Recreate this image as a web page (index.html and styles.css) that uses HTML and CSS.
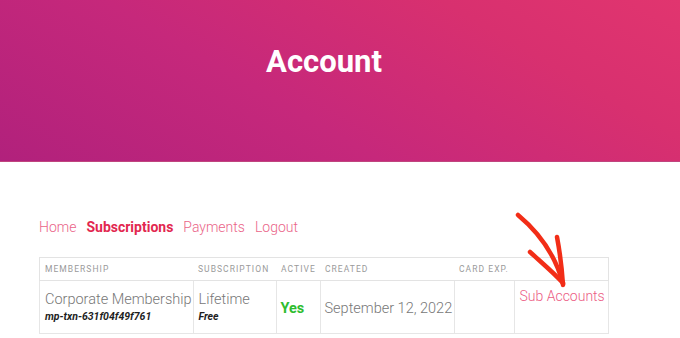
FILE: index.html
```html
<!DOCTYPE html>
<html>
<head>
    <title>Account</title>
    <link rel="stylesheet" href="styles.css">
</head>
<body>
    <div class="hero">
        <div class="hero-inner">
            <h1>Account</h1>
        </div>
    </div>

    <div class="content">
        <nav class="account-nav">
            <a href="#">Home</a>
            <a href="#" class="current">Subscriptions</a>
            <a href="#">Payments</a>
            <a href="#">Logout</a>
        </nav>

        <div class="table-wrap">
            <table class="subs">
                <thead>
                    <tr>
                        <th class="col-membership">Membership</th>
                        <th class="col-subscription">Subscription</th>
                        <th class="col-active">Active</th>
                        <th class="col-created">Created</th>
                        <th class="col-card">Card Exp.</th>
                        <th class="col-actions"></th>
                    </tr>
                </thead>
                <tbody>
                    <tr>
                        <td>
                            <div class="main-text">Corporate Membership</div>
                            <div class="sub-text">mp-txn-631f04f49f761</div>
                        </td>
                        <td>
                            <div class="main-text">Lifetime</div>
                            <div class="sub-text">Free</div>
                        </td>
                        <td class="middle"><span class="yes">Yes</span></td>
                        <td class="middle"><span class="main-text">September 12, 2022</span></td>
                        <td></td>
                        <td class="actions"><a href="#">Sub Accounts</a></td>
                    </tr>
                </tbody>
            </table>

            <!-- hand drawn pointer over the Sub Accounts link -->
            <svg class="arrow" width="70" height="90" viewBox="0 0 70 90">
                <path d="M6 8 C 24 23, 43 46, 51 77" />
                <path d="M45 30 C 48 46, 50 62, 51 78" />
                <path d="M18 45 C 30 56, 42 66, 51 76" />
            </svg>
        </div>
    </div>
</body>
</html>
```

FILE: styles.css
```css
body {
    margin: 0;
    font-family: Roboto, "Liberation Sans", Arial, sans-serif;
    background: #fff;
}
.hero {
    height: 161px;
    background: linear-gradient(30deg, #b1217c 0%, #c6287b 40%, #d8306f 75%, #e1356f 100%);
    border-bottom: 1px solid #c0457e;
}
.hero-inner {
    margin-left: 39px;
    width: 570px;
    text-align: center;
}
.hero h1 {
    margin: 0;
    padding-top: 44px;
    color: #fff;
    font-size: 31px;
    font-weight: 700;
    line-height: 36px;
}
.content {
    margin-left: 39px;
    width: 570px;
    padding-top: 53px;
}
.account-nav {
    display: flex;
    gap: 10px;
    font-size: 14px;
    line-height: 24px;
}
.account-nav a {
    color: #ea6488;
    text-decoration: none;
    font-weight: 300;
}
.account-nav a.current {
    color: #e2274f;
    font-weight: 700;
}
.table-wrap {
    position: relative;
    margin-top: 18px;
}
.subs {
    width: 570px;
    border-collapse: collapse;
    table-layout: fixed;
}
.subs th {
    height: 22px;
    padding: 0 0 0 5px;
    text-align: left;
    font-size: 8.5px;
    font-weight: 400;
    letter-spacing: 1.05px;
    text-transform: uppercase;
    color: #9a9a9a;
    border-top: 1px solid #e3e3e3;
    border-bottom: 1px solid #e3e3e3;
    white-space: nowrap;
    overflow: hidden;
}
.subs th:first-child { border-left: 1px solid #e3e3e3; }
.subs th:last-child { border-right: 1px solid #e3e3e3; }
.col-membership { width: 148px; }
.col-subscription { width: 78px; }
.col-active { width: 39px; }
.col-created { width: 129px; }
.col-card { width: 55px; }
.subs td {
    height: 53px;
    padding: 10px 0 0 5px;
    box-sizing: border-box;
    vertical-align: top;
    border: 1px solid #e6e6e6;
    white-space: nowrap;
}
.subs td.middle {
    vertical-align: middle;
    padding-top: 0;
    padding-left: 4px;
}
.main-text {
    font-size: 14.5px;
    font-weight: 300;
    color: #777;
    line-height: 17px;
}
.sub-text {
    font-size: 10.5px;
    font-weight: 700;
    font-style: italic;
    color: #1e1e1e;
    line-height: 17px;
}
.yes {
    font-size: 14.5px;
    font-weight: 700;
    color: #2fbd2f;
}
.actions a {
    display: block;
    margin-top: -3px;
    font-size: 14px;
    font-weight: 300;
    color: #ec5c84;
    text-decoration: none;
}
.arrow {
    position: absolute;
    left: 473px;
    top: -50px;
}
.arrow path {
    fill: none;
    stroke: #f22d17;
    stroke-width: 4.5;
    stroke-linecap: round;
}
```
